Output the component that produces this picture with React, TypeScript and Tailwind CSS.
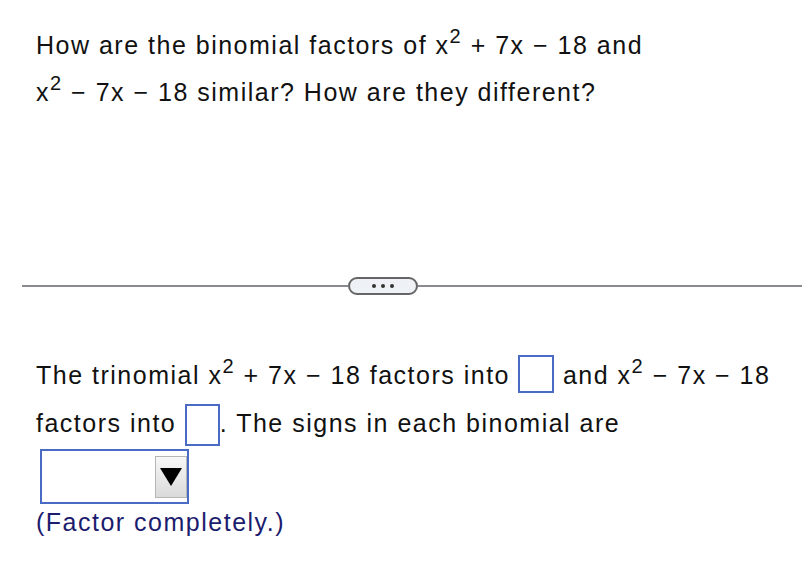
import { Fragment } from "react";

const Sq = ({ sign }: { sign: string }) => (
  <>
    x<sup className="static align-[11px] text-[20px] leading-none">2</sup> {sign} 7x − 18
  </>
);

const AnswerBox = ({ className }: { className: string }) => (
  <span className={`inline-block border-2 border-[#4a6bc4] bg-white ${className}`}></span>
);

const App = () => {
  return (
    <div
      className="w-[812px] h-[585px] bg-white text-[#111] text-[25px] tracking-[1.5px] overflow-hidden"
      style={{ fontFamily: '"Liberation Sans", Arial, sans-serif' }}
    >
      <div className="pl-[36px] pt-[22px]">
        <div className="h-[47px] leading-[47px] whitespace-nowrap">
          How are the binomial factors of <Sq sign="+" /> and
        </div>
        <div className="h-[47px] leading-[47px] whitespace-nowrap">
          <Sq sign="−" /> similar? How are they different?
        </div>
      </div>

      {/* divider with the collapse pill */}
      <div className="mt-[161px] flex items-center pl-[22px] pr-[10px]">
        <div className="w-[326px] h-[2px] bg-[#8a8a92]"></div>
        <div className="w-[70px] h-[18px] rounded-full border-2 border-[#666] bg-[#eef1f5] flex items-center justify-center gap-[5px]">
          {[0, 1, 2].map((i) => (
            <Fragment key={i}>
              <span className="w-[4px] h-[4px] rounded-full bg-[#333]"></span>
            </Fragment>
          ))}
        </div>
        <div className="flex-1 h-[2px] bg-[#8a8a92]"></div>
      </div>

      <div className="pl-[36px] mt-[56px]">
        <div className="h-[48px] leading-[48px] whitespace-nowrap">
          The trinomial <Sq sign="+" /> factors into{" "}
          <AnswerBox className="w-[36px] h-[38px] align-[-9px]" /> and <Sq sign="−" />
        </div>
        <div className="h-[48px] leading-[48px] whitespace-nowrap">
          factors into <AnswerBox className="w-[35px] h-[42px] align-[-14px]" />. The signs in each
          binomial are
        </div>
        <div className="ml-[4px] mt-[2px] w-[149px] h-[55px] border-2 border-[#4a6bc4] flex items-center justify-end">
          <div className="w-[32px] h-[42px] border border-[#b5b5b5] bg-gradient-to-b from-[#f7f7f7] to-[#dadada] flex items-center justify-center">
            <svg width="22" height="18" viewBox="0 0 22 18">
              <polygon points="0,0 22,0 11,18" fill="#000" />
            </svg>
          </div>
        </div>
        <div className="mt-[4px] h-[28px] leading-[28px] text-[#1c1c6e]">(Factor completely.)</div>
      </div>
    </div>
  );
};

export default App;
